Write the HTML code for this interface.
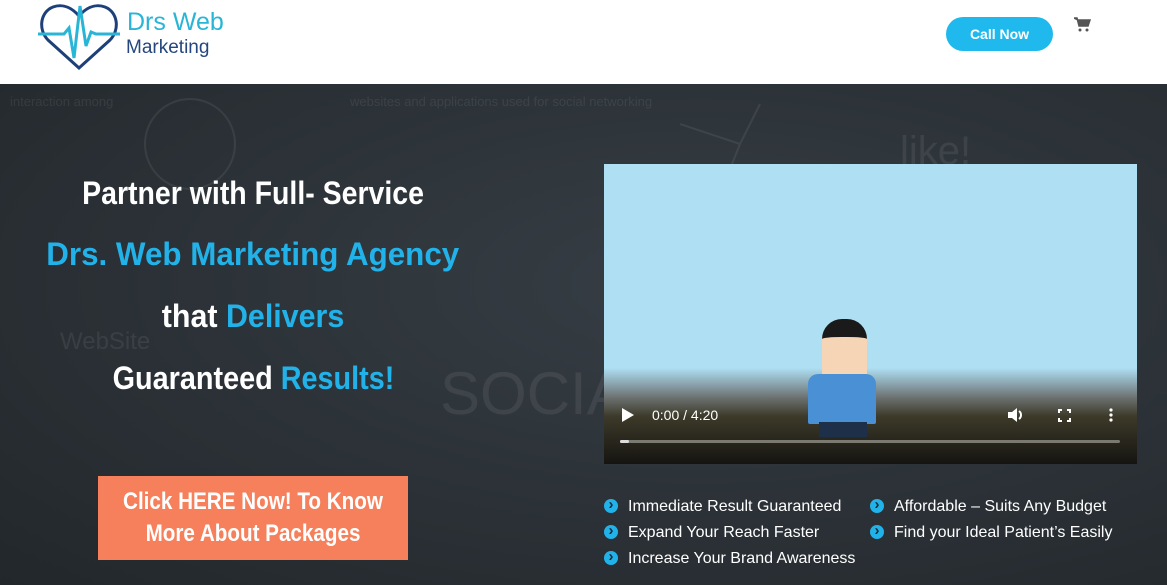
<!DOCTYPE html>
<html><head><meta charset="utf-8"><style>
*{margin:0;padding:0;box-sizing:border-box}
body{width:1167px;height:585px;overflow:hidden;font-family:"Liberation Sans",sans-serif;background:#fff;position:relative}
.hdr{position:absolute;left:0;top:0;width:1167px;height:84px;background:#fff}
.hero{position:absolute;left:0;top:84px;width:1167px;height:501px;background:radial-gradient(ellipse at 60% 40%,#363e45 0%,#2a3035 60%,#22272b 100%)}
.h{position:absolute;left:0;width:506px;text-align:center;white-space:nowrap}
.h span.t{display:inline-block;font-weight:bold;color:#fff;font-size:32px}
.h span.t.b,.b{color:#22b2ea}
.btn{position:absolute;left:98px;top:476px;width:310px;height:84px;background:#f7805c;color:#fff;font-weight:bold;font-size:24px;text-align:center;line-height:32px;padding-top:10px;white-space:nowrap}
.btn div{transform:scaleX(.86)}
.li{position:absolute;color:#fff;font-size:16px;white-space:nowrap}
.li:before{content:"›";position:absolute;left:-24px;top:1px;width:14px;height:14px;border-radius:50%;background:#22b2ea;color:#1b2a33;font-weight:bold;font-size:15px;line-height:12px;text-align:center}
</style></head><body>
<div class="hdr">
<svg style="position:absolute;left:36px;top:2px" width="86" height="68" viewBox="0 0 86 68">
<path d="M43 66 L12 38 C2 28 4 10 17 5 C28 1 37 7 43 14 C49 7 58 1 69 5 C82 10 84 28 74 38 Z" fill="none" stroke="#1d3f7a" stroke-width="3"/>
<path d="M2 32 L28 32 L33 26 L38 56 L44 4 L50 44 L55 30 L60 32 L84 32" fill="none" stroke="#29b6d6" stroke-width="3"/>
</svg>
<div style="position:absolute;left:127px;top:8px;font-size:25px;color:#29b6d6">Drs Web</div>
<div style="position:absolute;left:126px;top:37px;font-size:19px;color:#25467e">Marketing</div>
<div style="position:absolute;left:946px;top:17px;width:107px;height:34px;border-radius:17px;background:#1fb9ee;color:#fff;font-weight:bold;font-size:14px;text-align:center;line-height:34px">Call Now</div>
<svg style="position:absolute;left:1074px;top:17px" width="17" height="15" viewBox="0 0 17 15"><path d="M0 1h3l2 8h9l2-6H4z" fill="#555" stroke="#555" stroke-width="1.5"/><circle cx="6" cy="13" r="1.5" fill="#555"/><circle cx="13" cy="13" r="1.5" fill="#555"/></svg>
</div>
<div class="hero">
<svg width="1167" height="501" style="position:absolute;left:0;top:0;opacity:.07" fill="none" stroke="#fff" stroke-width="2">
<circle cx="190" cy="60" r="45"/><path d="M680 40 L740 60 L760 20 M740 60 L720 110"/><text x="10" y="22" fill="#fff" stroke="none" font-size="13">interaction among</text><text x="350" y="22" fill="#fff" stroke="none" font-size="13">websites and applications used for social networking</text><text x="440" y="330" fill="#fff" stroke="none" font-size="60">SOCIAL</text><text x="60" y="265" fill="#fff" stroke="none" font-size="24">WebSite</text><text x="900" y="80" fill="#fff" stroke="none" font-size="40">like!</text>
</svg>
</div>
<div class="h" style="top:175px"><span class="t" style="transform:scaleX(.89)">Partner with Full- Service</span></div>
<div class="h" style="top:236px"><span class="t b" style="transform:scaleX(.98)">Drs. Web Marketing Agency</span></div>
<div class="h" style="top:298px"><span class="t" style="transform:scaleX(.95)">that <span class="b">Delivers</span></span></div>
<div class="h" style="top:360px"><span class="t" style="transform:scaleX(.9)">Guaranteed <span class="b">Results!</span></span></div>
<div class="btn"><div>Click HERE Now! To Know</div><div>More About Packages</div></div>
<div style="position:absolute;left:604px;top:164px;width:533px;height:300px;background:linear-gradient(#aedff3 0%,#aedff3 68%,#6b7070 78%,#3d3a2a 84%,#151410 100%)">
<div style="position:absolute;left:218px;top:155px;width:45px;height:62px;background:#f5d5b5;border-radius:20px 20px 6px 6px;border-top:18px solid #1a1a1a"></div>
<div style="position:absolute;left:204px;top:210px;width:68px;height:50px;background:#4a90d4;border-radius:10px 10px 2px 2px"></div>
<div style="position:absolute;left:215px;top:258px;width:48px;height:15px;background:#1e2f4a"></div>
<svg style="position:absolute;left:18px;top:244px" width="12" height="14"><path d="M0 0L12 7L0 14Z" fill="#fff"/></svg>
<div style="position:absolute;left:48px;top:243px;color:#fff;font-size:14px">0:00 / 4:20</div>
<svg style="position:absolute;left:404px;top:244px" width="16" height="14"><path d="M0 4h4l5-4v14l-5-4H0z" fill="#fff"/><path d="M11 3a5 5 0 0 1 0 8" stroke="#fff" stroke-width="2" fill="none"/></svg>
<svg style="position:absolute;left:454px;top:245px" width="13" height="13" fill="none" stroke="#fff" stroke-width="2"><path d="M1 4V1h3M9 1h3v3M12 9v3H9M4 12H1V9"/></svg>
<svg style="position:absolute;left:505px;top:244px" width="4" height="14" fill="#fff"><circle cx="2" cy="2" r="1.6"/><circle cx="2" cy="7" r="1.6"/><circle cx="2" cy="12" r="1.6"/></svg>
<div style="position:absolute;left:16px;top:276px;width:500px;height:3px;background:#7b7a70;border-radius:2px"></div>
<div style="position:absolute;left:16px;top:276px;width:9px;height:3px;background:#ddd;border-radius:2px"></div>
</div>
<div class="li" style="left:628px;top:498px">Immediate Result Guaranteed</div>
<div class="li" style="left:628px;top:524px">Expand Your Reach Faster</div>
<div class="li" style="left:628px;top:550px">Increase Your Brand Awareness</div>
<div class="li" style="left:894px;top:498px">Affordable – Suits Any Budget</div>
<div class="li" style="left:894px;top:524px">Find your Ideal Patient’s Easily</div>
</body></html>
